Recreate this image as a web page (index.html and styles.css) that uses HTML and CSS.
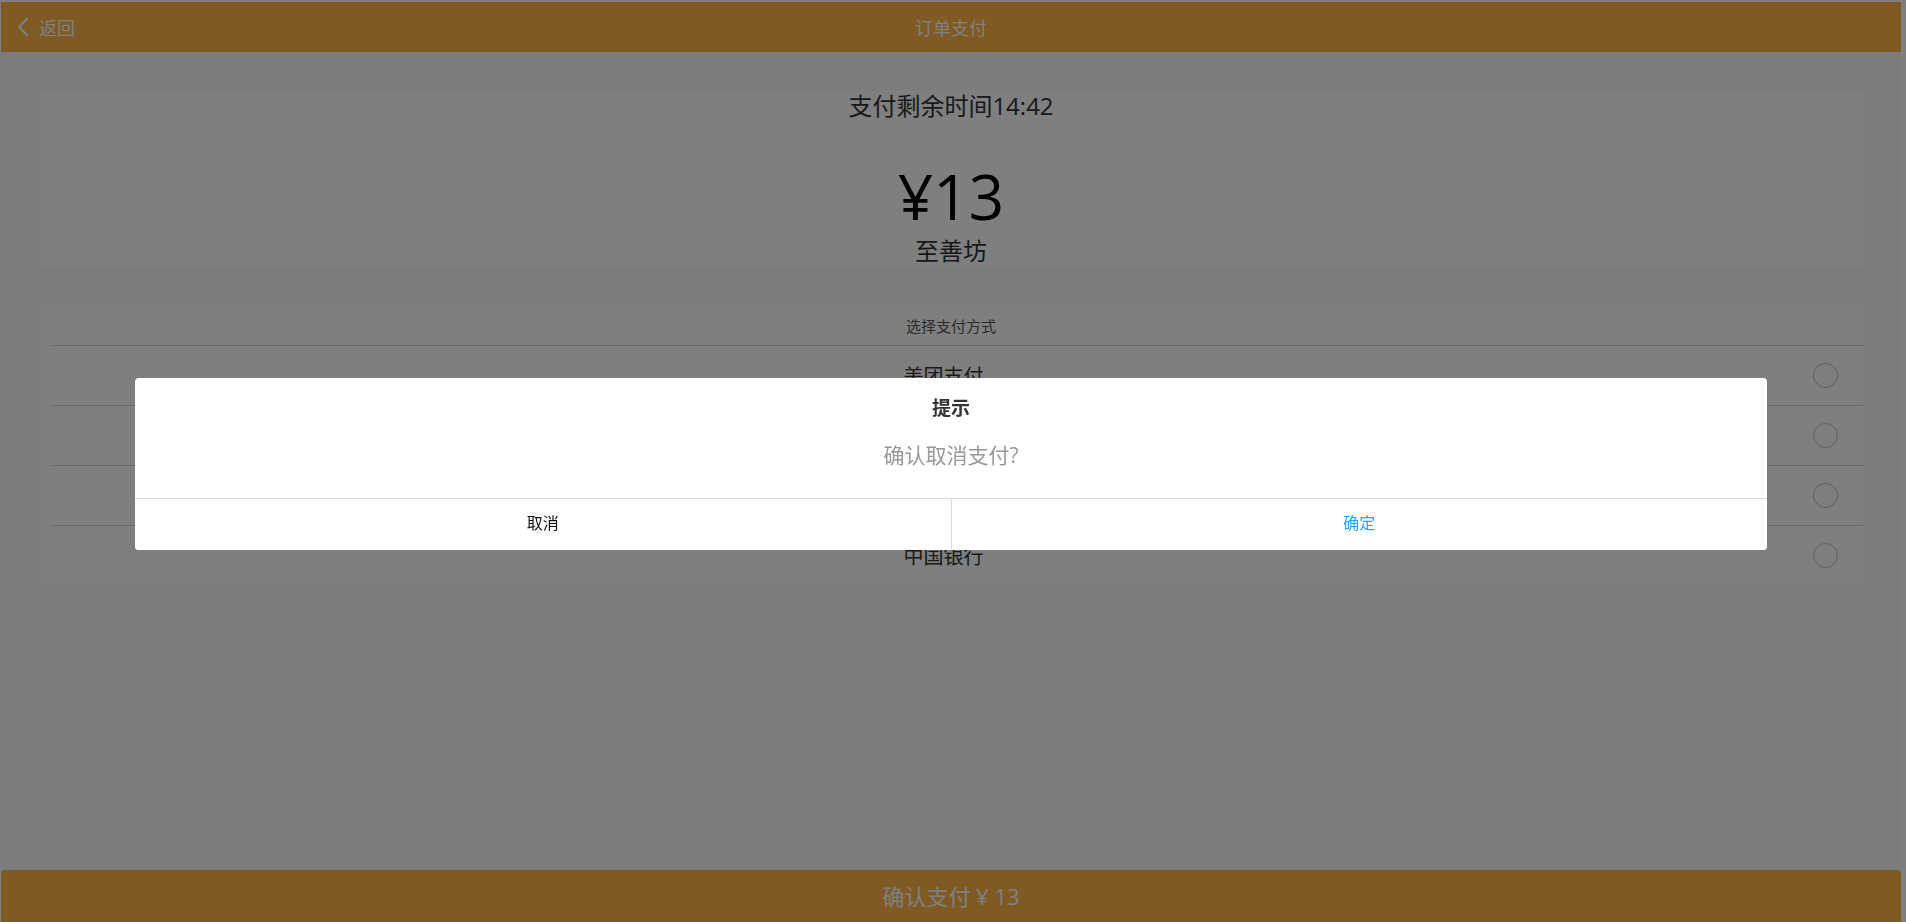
FILE: index.html
```html
<!DOCTYPE html>
<html lang="zh-CN">
<head>
<meta charset="utf-8">
<title>订单支付</title>
<link rel="stylesheet" href="styles.css">
</head>
<body>
<div class="app">
  <header class="topbar">
    <a class="back">
      <svg class="back-icon" viewBox="0 0 12 20" width="12" height="20"><path d="M10 2 L2 10 L10 18" fill="none" stroke="#fff" stroke-width="2.2" stroke-linecap="round" stroke-linejoin="round"/></svg>
      <span>返回</span>
    </a>
    <div class="title">订单支付</div>
  </header>

  <section class="card summary">
    <div class="timer">支付剩余时间14:42</div>
    <div class="amount">¥13</div>
    <div class="shop">至善坊</div>
  </section>

  <section class="card methods">
    <div class="methods-head">选择支付方式</div>
    <div class="methods-list">
      <div class="method"><span class="method-name">美团支付</span><span class="radio"></span></div>
      <div class="method"><span class="method-name">微信支付</span><span class="radio"></span></div>
      <div class="method"><span class="method-name">支付宝</span><span class="radio"></span></div>
      <div class="method"><span class="method-name">中国银行</span><span class="radio"></span></div>
    </div>
  </section>

  <footer class="paybar">确认支付 ¥ 13</footer>
</div>

<div class="mask">
  <div class="dialog">
    <div class="dialog-body">
      <div class="dialog-title">提示</div>
      <div class="dialog-msg">确认取消支付?</div>
    </div>
    <div class="dialog-actions">
      <button class="btn btn-cancel">取消</button>
      <button class="btn btn-ok">确定</button>
    </div>
  </div>
</div>
</body>
</html>
```

FILE: styles.css
```css
* { box-sizing: border-box; }
html, body { height: 100%; }
body {
  margin: 0;
  padding: 2px 5px 0 1px;
  background: #fff;
  font-family: "Open Sans", "Noto Sans CJK SC", sans-serif;
  color: #333;
  overflow: hidden;
}
.app {
  width: 1900px;
  min-height: 920px;
  background: #f6f8f6;
  position: relative;
}
.topbar {
  height: 50px;
  background: #ffb444;
  color: #fff;
  display: flex;
  align-items: center;
  justify-content: center;
  position: relative;
}
.back {
  position: absolute;
  left: 16px;
  top: 0;
  height: 50px;
  display: flex;
  align-items: center;
  gap: 10px;
  font-size: 18px;
  color: #fff;
}
.back-icon { display: block; }
.title { font-size: 18px; }

.card {
  margin: 38px 38px 0;
  background: #fff;
}
.summary {
  height: 177px;
  display: flex;
  flex-direction: column;
  align-items: center;
}
.timer {
  font-size: 24px;
  line-height: 32px;
  color: #333;
}
.amount {
  margin-top: 43px;
  font-size: 62px;
  line-height: 62px;
  color: #000;
}
.shop {
  margin-top: 9px;
  font-size: 24px;
  line-height: 30px;
  color: #333;
}

.methods-head {
  height: 40px;
  display: flex;
  align-items: center;
  justify-content: center;
  font-size: 15px;
  color: #555;
}
.methods-list {
  margin-left: 13px;
  border-top: 1px solid #d0d0d0;
}
.method {
  height: 60px;
  border-bottom: 1px solid #d0d0d0;
  display: flex;
  align-items: center;
}
.method:last-child { border-bottom: none; height: 59px; }
.method-name {
  flex: 1;
  padding-left: 22px;
  text-align: center;
  font-size: 20px;
  color: #333;
}
.radio {
  width: 25px;
  height: 25px;
  margin-right: 25px;
  border: 1px solid #c0c0c0;
  border-radius: 50%;
}

.paybar {
  position: fixed;
  left: 1px;
  bottom: -2px;
  width: 1900px;
  height: 54px;
  padding-bottom: 5px;
  background: #ffb444;
  border-radius: 4px 4px 0 0;
  color: #fff;
  font-size: 22px;
  display: flex;
  align-items: center;
  justify-content: center;
}

.mask {
  position: fixed;
  inset: 0;
  padding-right: 4px;
  background: rgba(0, 0, 0, 0.5);
  display: flex;
  align-items: center;
  justify-content: center;
}
.dialog {
  width: 85.8%;
  margin-top: 5px;
  background: #fff;
  border-radius: 4px;
  overflow: hidden;
}
.dialog-body {
  height: 120px;
  padding-top: 16px;
  display: flex;
  flex-direction: column;
  align-items: center;
}
.dialog-title {
  font-size: 19px;
  font-weight: 700;
  line-height: 28px;
  color: #333;
}
.dialog-msg {
  margin-top: 18px;
  font-size: 21px;
  line-height: 30px;
  color: #999;
}
.dialog-actions {
  display: flex;
  height: 52px;
  border-top: 1px solid #ddd;
}
.btn {
  flex: 1;
  border: none;
  background: #fff;
  font-family: inherit;
  font-size: 16px;
  padding: 0 0 4px;
}
.btn-cancel { color: #111; border-right: 1px solid #ddd; }
.btn-ok { color: #26a2ff; }
```
